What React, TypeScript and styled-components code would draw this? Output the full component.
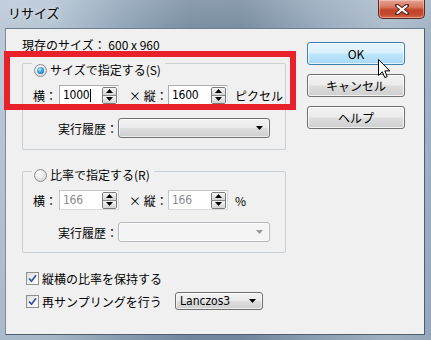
import styled, { createGlobalStyle } from "styled-components";

const GlobalStyle = createGlobalStyle`
  body {
    margin: 0;
    background: #fff;
    font-family: "Noto Sans CJK JP", "Noto Sans", sans-serif;
    font-size: 12px;
    color: #000;
  }
`;

const Window = styled.div`
  position: relative;
  width: 431px;
  height: 340px;
  box-sizing: border-box;
  padding: 0 6px 5px 5px;
  display: flex;
  flex-direction: column;
  overflow: hidden;
  background:
    linear-gradient(180deg, rgba(255, 255, 255, 0.12) 0, rgba(255, 255, 255, 0) 28px, rgba(40, 70, 100, 0.12) 100%),
    linear-gradient(90deg, #bccad8 0%, #b6c5d4 12%, #93a7bb 28%, #7b8fa4 44%, #7a8ea3 56%, #98abbe 74%, #aebecd 90%, #a3b4c5 100%);
`;

const TitleBar = styled.div`
  height: 28px;
  display: flex;
  align-items: flex-start;
  justify-content: space-between;
`;

const Title = styled.span`
  margin: 5px 0 0 3px;
  font-size: 13px;
  line-height: 16px;
  color: #000;
  text-shadow: 0 0 6px rgba(255, 255, 255, 0.8);
`;

const CloseButton = styled.div`
  width: 47px;
  height: 19px;
  box-sizing: border-box;
  display: flex;
  align-items: center;
  justify-content: center;
  border: 1px solid #5a2a22;
  border-top: none;
  border-radius: 0 0 5px 5px;
  background: linear-gradient(180deg, #e6a394 0%, #d7765f 40%, #c3442a 55%, #c24a2f 80%, #d56a4e 100%);
  box-shadow: inset 0 0 0 1px rgba(255, 220, 210, 0.45);
`;

const Client = styled.div`
  flex: 1;
  display: flex;
  background: #f0f0f0;
  border: 1px solid #4f5e6e;
  border-top-color: #6d7f91;
  border-left-color: #7a8c9e;
`;

const LeftCol = styled.div`
  width: 280px;
  flex-shrink: 0;
  box-sizing: border-box;
  padding-left: 16px;
  display: flex;
  flex-direction: column;
`;

const SizeLine = styled.div`
  margin-top: 9px;
  height: 14px;
  line-height: 14px;
  white-space: nowrap;
`;

const Group = styled.div<{ $mt: number; $pb: number }>`
  margin-top: ${(p) => p.$mt}px;
  width: 264px;
  box-sizing: border-box;
  border: 1px solid #c9d0d6;
  border-radius: 2px;
  padding-bottom: ${(p) => p.$pb}px;
  display: flex;
  flex-direction: column;
`;

const Legend = styled.div<{ $mt: number }>`
  align-self: flex-start;
  margin: ${(p) => p.$mt}px 0 0 9px;
  height: 16px;
  padding: 0 4px 0 2px;
  background: #f0f0f0;
  display: flex;
  align-items: center;
  gap: 3px;
  line-height: 16px;
  white-space: nowrap;
`;

const Radio = styled.span<{ $on?: boolean }>`
  width: 13px;
  height: 13px;
  box-sizing: border-box;
  border-radius: 50%;
  border: 1px solid #8c8f94;
  display: flex;
  align-items: center;
  justify-content: center;
  background: radial-gradient(circle at 40% 35%, #ffffff 0%, #e4e4e4 55%, #c9c9c9 100%);

  &::after {
    content: "";
    display: ${(p) => (p.$on ? "block" : "none")};
    width: 7px;
    height: 7px;
    border-radius: 50%;
    background: radial-gradient(circle at 40% 35%, #b9ecff 0%, #3aa3e0 45%, #0a4f8f 100%);
  }
`;

const FieldRow = styled.div<{ $mt: number }>`
  margin-top: ${(p) => p.$mt}px;
  padding-left: 10px;
  height: 20px;
  display: flex;
  align-items: center;
  white-space: nowrap;

  & > * {
    flex-shrink: 0;
  }
`;

const FieldLabel = styled.span<{ $w: number; $pl?: number }>`
  width: ${(p) => p.$w}px;
  flex-shrink: 0;
  box-sizing: border-box;
  padding-left: ${(p) => p.$pl ?? 0}px;
  color: #000;
`;

const Unit = styled.span`
  margin-left: 7px;
`;

const NumField = styled.div<{ $off?: boolean }>`
  width: 60px;
  height: 20px;
  box-sizing: border-box;
  border: 1px solid ${(p) => (p.$off ? "#c3c7cb" : "#abadb3")};
  border-bottom-color: ${(p) => (p.$off ? "#d8dbde" : "#e3e9ef")};
  border-right-color: ${(p) => (p.$off ? "#d8dbde" : "#dbdfe6")};
  background: #fff;
  display: flex;
  align-items: center;
  justify-content: space-between;
  padding: 0 1px 0 3px;
  color: ${(p) => (p.$off ? "#8a8a8a" : "#000")};
  font-family: "DejaVu Sans Condensed", "Liberation Sans", sans-serif;
  font-size: 12px;
`;

const Value = styled.span`
  display: flex;
  align-items: center;
  letter-spacing: -0.3px;
`;

const Caret = styled.span`
  width: 1px;
  height: 13px;
  margin-left: 1px;
  background: #000;
`;

const Spin = styled.div`
  width: 15px;
  height: 17px;
  box-sizing: border-box;
  border: 1px solid #7a7a7a;
  border-radius: 2px;
  display: flex;
  flex-direction: column;
  overflow: hidden;
`;

const SpinHalf = styled.div`
  flex: 1;
  display: flex;
  align-items: center;
  justify-content: center;
  background: linear-gradient(180deg, #f4f4f4 0%, #e2e2e2 60%, #d2d2d2 100%);

  & + & {
    border-top: 1px solid #8a8a8a;
  }
`;

const HistoryRow = styled.div<{ $mt: number }>`
  margin-top: ${(p) => p.$mt}px;
  padding-left: 35px;
  display: flex;
  align-items: center;
  white-space: nowrap;
`;

const Combo = styled.div<{ $w: number; $h: number; $off?: boolean }>`
  width: ${(p) => p.$w}px;
  height: ${(p) => p.$h}px;
  flex-shrink: 0;
  box-sizing: border-box;
  border: 1px solid ${(p) => (p.$off ? "#b5b9bd" : "#707070")};
  border-radius: 3px;
  background: ${(p) =>
    p.$off
      ? "#f4f4f4"
      : "linear-gradient(180deg, #f2f2f2 0%, #ebebeb 48%, #dddddd 52%, #cfcfcf 100%)"};
  box-shadow: inset 0 0 0 1px rgba(255, 255, 255, 0.6);
  display: flex;
  align-items: center;
  justify-content: space-between;
  padding: 0 6px 0 4px;
  font-family: "DejaVu Sans Condensed", "Liberation Sans", sans-serif;
  font-size: 12px;
`;

const CheckRow = styled.div<{ $mt: number; $h: number }>`
  margin-top: ${(p) => p.$mt}px;
  margin-left: 4px;
  height: ${(p) => p.$h}px;
  display: flex;
  align-items: center;
  white-space: nowrap;
`;

const CheckBox = styled.span`
  width: 13px;
  height: 13px;
  flex-shrink: 0;
  box-sizing: border-box;
  border: 1px solid #8e8f8f;
  background: linear-gradient(135deg, #dcdcdc 0%, #f6f6f6 60%, #ffffff 100%);
  display: flex;
  align-items: center;
  justify-content: center;
  margin-right: 3px;
`;

const CheckLabel = styled.span<{ $w?: number }>`
  width: ${(p) => (p.$w ? `${p.$w}px` : "auto")};
  flex-shrink: 0;
`;

const ButtonCol = styled.div`
  margin: 13px 0 0 21px;
  display: flex;
  flex-direction: column;
  gap: 9px;
`;

const Button = styled.div<{ $hot?: boolean }>`
  width: 98px;
  height: 23px;
  box-sizing: border-box;
  border: 1px solid ${(p) => (p.$hot ? "#3c7fb1" : "#707070")};
  border-radius: 3px;
  background: ${(p) =>
    p.$hot
      ? "linear-gradient(180deg, #eaf6fd 0%, #d9f0fc 48%, #bee6fd 52%, #a7d9f5 100%)"
      : "linear-gradient(180deg, #f2f2f2 0%, #ebebeb 48%, #dddddd 52%, #cfcfcf 100%)"};
  box-shadow: inset 0 0 0 1px rgba(255, 255, 255, 0.7);
  display: flex;
  align-items: center;
  justify-content: center;
  font-size: 12px;
  color: #000;
`;

const Annotation = styled.div`
  position: absolute;
  left: 4px;
  top: 51px;
  width: 292px;
  height: 59px;
  box-sizing: border-box;
  border: 6px solid #e8212b;
  pointer-events: none;
`;

const Pointer = styled.svg`
  position: absolute;
  left: 378px;
  top: 59px;
`;

const Tri = ({ up, color = "#000" }: { up?: boolean; color?: string }) => (
  <svg width="7" height="4" viewBox="0 0 7 4">
    <path d={up ? "M0 4 L3.5 0 L7 4 Z" : "M0 0 L7 0 L3.5 4 Z"} fill={color} />
  </svg>
);

const SpinBox = ({ value, off, caret }: { value: string; off?: boolean; caret?: boolean }) => (
  <NumField $off={off}>
    <Value>
      {value}
      {caret && <Caret />}
    </Value>
    <Spin>
      <SpinHalf>
        <Tri up />
      </SpinHalf>
      <SpinHalf>
        <Tri />
      </SpinHalf>
    </Spin>
  </NumField>
);

const Check = () => (
  <CheckBox>
    <svg width="9" height="9" viewBox="0 0 9 9">
      <path d="M1 4.5 L3.5 7.2 L8 1.2" fill="none" stroke="#3b56a6" strokeWidth="1.8" />
    </svg>
  </CheckBox>
);

export default function App() {
  return (
    <>
      <GlobalStyle />
      <Window>
        <TitleBar>
          <Title>リサイズ</Title>
          <CloseButton>
            <svg width="14" height="11" viewBox="0 0 14 11">
              <path d="M2 1.5 L12 9.5 M12 1.5 L2 9.5" stroke="#5b2219" strokeWidth="4" strokeLinecap="round" />
              <path d="M2.5 2 L11.5 9 M11.5 2 L2.5 9" stroke="#fff" strokeWidth="2.2" strokeLinecap="round" />
            </svg>
          </CloseButton>
        </TitleBar>
        <Client>
          <LeftCol>
            <SizeLine>現存のサイズ： 600 x 960</SizeLine>

            <Group $mt={11} $pb={11}>
              <Legend $mt={-2}>
                <Radio $on />
                サイズで指定する(S)
              </Legend>
              <FieldRow $mt={7}>
                <FieldLabel $w={26}>横：</FieldLabel>
                <SpinBox value="1000" caret />
                <FieldLabel $w={49} $pl={10}>× 縦：</FieldLabel>
                <SpinBox value="1600" />
                <Unit>ピクセル</Unit>
              </FieldRow>
              <HistoryRow $mt={13}>
                <FieldLabel $w={60}>実行履歴：</FieldLabel>
                <Combo $w={152} $h={20}>
                  <span />
                  <Tri />
                </Combo>
              </HistoryRow>
            </Group>

            <Group $mt={21} $pb={10}>
              <Legend $mt={-5}>
                <Radio />
                比率で指定する(R)
              </Legend>
              <FieldRow $mt={7}>
                <FieldLabel $w={26}>横：</FieldLabel>
                <SpinBox value="166" off />
                <FieldLabel $w={49} $pl={10}>× 縦：</FieldLabel>
                <SpinBox value="166" off />
                <Unit>%</Unit>
              </FieldRow>
              <HistoryRow $mt={12}>
                <FieldLabel $w={60}>実行履歴：</FieldLabel>
                <Combo $w={152} $h={20} $off>
                  <span />
                  <Tri color="#9a9a9a" />
                </Combo>
              </HistoryRow>
            </Group>

            <CheckRow $mt={17} $h={16}>
              <Check />
              <CheckLabel>縦横の比率を保持する</CheckLabel>
            </CheckRow>
            <CheckRow $mt={6} $h={18}>
              <Check />
              <CheckLabel $w={133}>再サンプリングを行う</CheckLabel>
              <Combo $w={88} $h={18}>
                <span>Lanczos3</span>
                <Tri />
              </Combo>
            </CheckRow>
          </LeftCol>

          <ButtonCol>
            <Button $hot>OK</Button>
            <Button>キャンセル</Button>
            <Button>ヘルプ</Button>
          </ButtonCol>
        </Client>

        <Annotation />
        <Pointer width="13" height="20" viewBox="0 0 13 20">
          <path
            d="M0.5 0.5 L0.5 16.5 L4.3 12.8 L6.8 18.6 L9.2 17.6 L6.8 11.9 L11.8 11.9 Z"
            fill="#fff"
            stroke="#000"
            strokeWidth="1"
            strokeLinejoin="miter"
          />
        </Pointer>
      </Window>
    </>
  );
}
